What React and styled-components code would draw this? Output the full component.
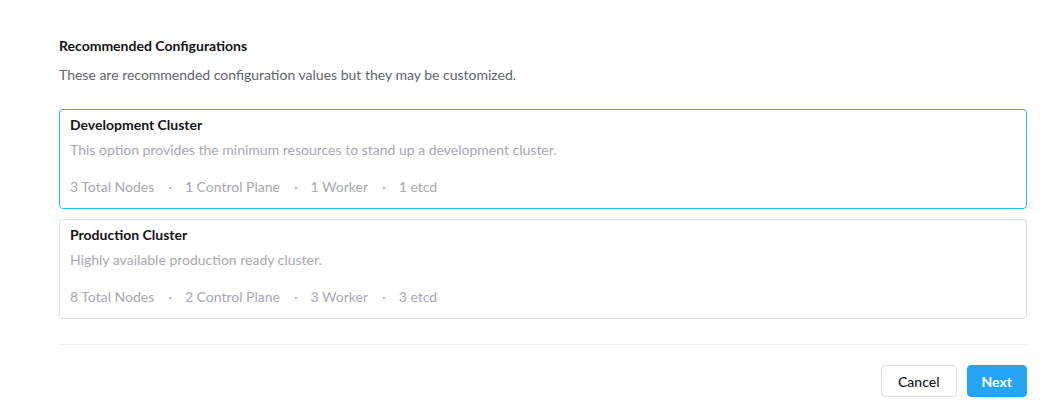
import React from "react";
import styled, { createGlobalStyle } from "styled-components";

const Global = createGlobalStyle`
  html, body { margin: 0; padding: 0; background: #fff; }
  body { font-family: Lato, "Open Sans", Arial, sans-serif; color: #141419; }
  * { box-sizing: border-box; }
`;

const Page = styled.div`
  padding: 37px 33px 0 59px;
  width: 1060px;
`;

const Heading = styled.h3`
  margin: 0;
  font-size: 14px;
  font-weight: 700;
  line-height: 18px;
  color: #141419;
`;

const Intro = styled.p`
  margin: 10px 0 0;
  font-size: 14px;
  line-height: 20px;
  color: #5f6470;
`;

const Cards = styled.div`
  display: flex;
  flex-direction: column;
  gap: 10px;
  margin-top: 24px;
`;

const Card = styled.div`
  border: 1px solid ${(p) => (p.$selected ? "#2eb7ea" : "#dcdee7")};
  border-radius: 4px;
  height: 100px;
  padding: 6px 10px;
  background: #fff;
`;

const CardTitle = styled.div`
  font-size: 14px;
  font-weight: 700;
  line-height: 18px;
  color: #141419;
`;

const CardDesc = styled.div`
  margin-top: 7px;
  font-size: 14px;
  line-height: 18px;
  color: #a7a9b3;
`;

const Stats = styled.div`
  margin-top: 19px;
  display: flex;
  align-items: center;
  font-size: 14px;
  line-height: 18px;
  color: #a7a9b3;
`;

const Dot = styled.span`
  margin: 0 13px 0 14px;
`;

const Divider = styled.hr`
  margin: 25px 0 0;
  border: 0;
  border-top: 1px solid #eeeff3;
`;

const Footer = styled.div`
  display: flex;
  justify-content: flex-end;
  gap: 10px;
  margin-top: 20px;
`;

const Button = styled.button`
  height: 32px;
  padding: 0 ${(p) => (p.$primary ? 14 : 16)}px;
  border-radius: 4px;
  font-family: inherit;
  font-size: 14px;
  font-weight: ${(p) => (p.$primary ? 700 : 500)};
  border: 1px solid ${(p) => (p.$primary ? "#26a5f4" : "#dcdee7")};
  background: ${(p) => (p.$primary ? "#26a5f4" : "#fff")};
  color: ${(p) => (p.$primary ? "#fff" : "#141419")};
  cursor: pointer;
`;

const options = [
  {
    title: "Development Cluster",
    desc: "This option provides the minimum resources to stand up a development cluster.",
    stats: ["3 Total Nodes", "1 Control Plane", "1 Worker", "1 etcd"],
    selected: true,
  },
  {
    title: "Production Cluster",
    desc: "Highly available production ready cluster.",
    stats: ["8 Total Nodes", "2 Control Plane", "3 Worker", "3 etcd"],
  },
];

export default function App() {
  return (
    <>
      <Global />
      <Page>
        <Heading>Recommended Configurations</Heading>
        <Intro>These are recommended configuration values but they may be customized.</Intro>
        <Cards>
          {options.map((o) => (
            <Card key={o.title} $selected={o.selected}>
              <CardTitle>{o.title}</CardTitle>
              <CardDesc>{o.desc}</CardDesc>
              <Stats>
                {o.stats.map((s, i) => (
                  <React.Fragment key={s}>
                    {i > 0 && <Dot>·</Dot>}
                    <span>{s}</span>
                  </React.Fragment>
                ))}
              </Stats>
            </Card>
          ))}
        </Cards>
        <Divider />
        <Footer>
          <Button>Cancel</Button>
          <Button $primary>Next</Button>
        </Footer>
      </Page>
    </>
  );
}
